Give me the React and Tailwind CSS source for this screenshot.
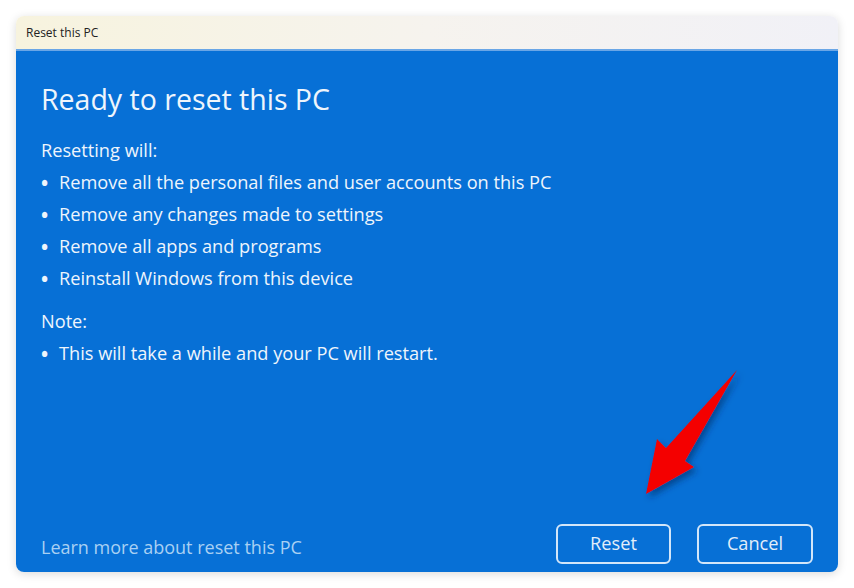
import React from "react";

const items = [
  "Remove all the personal files and user accounts on this PC",
  "Remove any changes made to settings",
  "Remove all apps and programs",
  "Reinstall Windows from this device",
];

const Bullet = ({ children }) => (
  <li className="flex items-center h-[32px]">
    <span className="w-[18px] text-[19px] font-bold">•</span>
    <span>{children}</span>
  </li>
);

const App = () => {
  return (
    <div
      className="relative w-[854px] h-[588px] bg-white p-4 overflow-hidden"
      style={{ fontFamily: '"Open Sans", "Noto Sans", sans-serif' }}
    >
      <div className="flex flex-col h-[556px] rounded-lg overflow-hidden shadow-[0_2px_10px_rgba(0,0,0,0.15)]">
        {/* title bar */}
        <div className="flex items-center h-[35px] px-[10px] bg-gradient-to-r from-[#f7f3de] via-[#f6f3ee] to-[#f1f1f7] border-b-2 border-[#6aa6e6]">
          <span className="text-[12px] text-[#222]">Reset this PC</span>
        </div>

        {/* body */}
        <div className="flex-1 flex flex-col justify-between bg-[#0770d6] text-[#eef5fc]">
          <div className="pl-[25px] pt-[28px]">
            <h1 className="text-[28.5px] leading-[40px] mb-[16px]">Ready to reset this PC</h1>
            <p className="text-[18.2px] h-[32px] flex items-center">Resetting will:</p>
            <ul className="text-[18.2px]">
              {items.map((t) => (
                <Bullet key={t}>{t}</Bullet>
              ))}
            </ul>
            <p className="text-[18.2px] h-[32px] flex items-center mt-[11px]">Note:</p>
            <ul className="text-[18.2px]">
              <Bullet>This will take a while and your PC will restart.</Bullet>
            </ul>
          </div>

          <div className="flex items-end justify-between pl-[25px] pr-[25px] pb-[8px]">
            <a className="text-[18px] text-[#a9d0f3] mb-[3px]">Learn more about reset this PC</a>
            <div className="flex gap-[26px]">
              <button className="w-[115px] h-[40px] rounded-md border-2 border-[#d3e6f9] text-[18.2px] text-[#e2eefa] bg-[#0770d6]">
                Reset
              </button>
              <button className="w-[116px] h-[40px] rounded-md border-2 border-[#d3e6f9] text-[18.2px] text-[#e2eefa] bg-[#0770d6]">
                Cancel
              </button>
            </div>
          </div>
        </div>
      </div>

      {/* red annotation arrow */}
      <svg className="absolute left-0 top-0" width="854" height="588">
        <defs>
          <filter id="sh" x="-20%" y="-20%" width="140%" height="140%">
            <feDropShadow dx="3" dy="4" stdDeviation="3" floodColor="#002a5c" floodOpacity="0.55" />
          </filter>
        </defs>
        <polygon
          points="737,370 685,461 694,467 646,494 657,439 666,448"
          fill="#f40000"
          filter="url(#sh)"
        />
      </svg>
    </div>
  );
};

export default App;
